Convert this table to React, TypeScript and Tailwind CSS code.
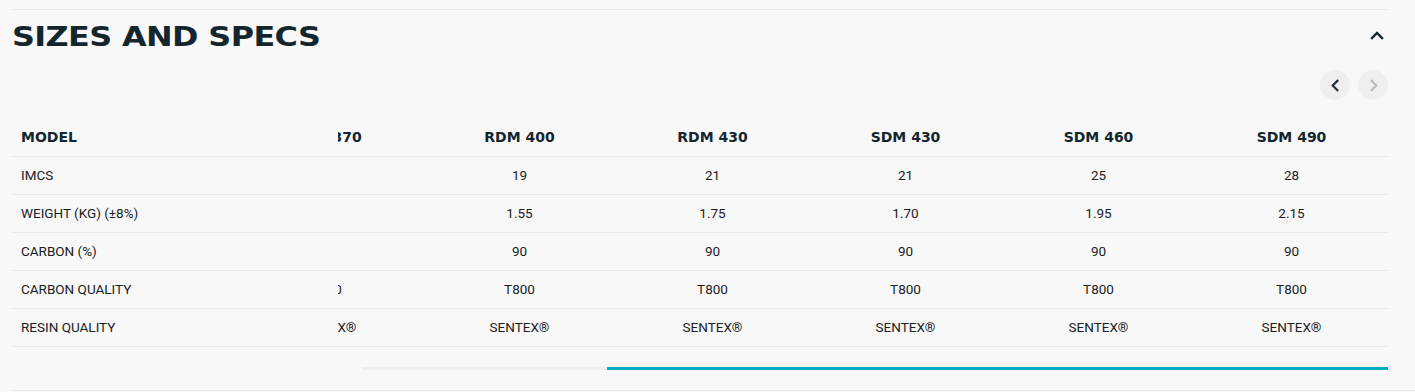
const models = ["RDM 370", "RDM 400", "RDM 430", "SDM 430", "SDM 460", "SDM 490"];

const specs: { label: string; values: string[] }[] = [
  { label: "IMCS", values: ["17", "19", "21", "21", "25", "28"] },
  { label: "WEIGHT (KG) (±8%)", values: ["1.4", "1.55", "1.75", "1.70", "1.95", "2.15"] },
  { label: "CARBON (%)", values: ["90", "90", "90", "90", "90", "90"] },
  { label: "CARBON QUALITY", values: ["T800", "T800", "T800", "T800", "T800", "T800"] },
  { label: "RESIN QUALITY", values: ["SENTEX®", "SENTEX®", "SENTEX®", "SENTEX®", "SENTEX®", "SENTEX®"] },
];

const wide = "font-['DejaVu_Sans',sans-serif] font-bold text-[#13262d]";
const body = "font-['Roboto',sans-serif] text-[13.5px] text-[#1a2124]";

function Chevron({ dir, className }: { dir: "up" | "left" | "right"; className?: string }) {
  const d = dir === "up" ? "M2 8 L7 3 L12 8" : dir === "left" ? "M9 2 L4 7 L9 12" : "M5 2 L10 7 L5 12";
  return (
    <svg viewBox="0 0 14 14" className={className} fill="none" stroke="currentColor" strokeWidth={2.4} strokeLinecap="square">
      <path d={d} />
    </svg>
  );
}

function Row({ label, cells, head }: { label: string; cells: string[]; head?: boolean }) {
  return (
    <div className="flex h-[38px] border-b border-[#e9e9e9]">
      <div className={`flex w-[326px] shrink-0 items-center pl-[9px] ${head ? `${wide} text-[14px]` : body}`}>{label}</div>
      <div className="flex flex-1 justify-end overflow-hidden">
        {cells.map((c, i) => (
          <div
            key={i}
            className={`flex w-[193px] shrink-0 items-center justify-center ${head ? `${wide} text-[14px]` : body}`}
          >
            {c}
          </div>
        ))}
      </div>
    </div>
  );
}

export default function App() {
  return (
    <div className="min-h-[392px] w-[1415px] overflow-hidden bg-[#f8f8f8] pt-[9px]">
      <div className="ml-3 w-[1376px] border-t border-[#e9e9e9]">
        <div className="flex h-[54px] items-center justify-between">
          <h2 className={`${wide} origin-left scale-x-[1.225] text-[26px] leading-none tracking-[-0.5px]`}>SIZES AND SPECS</h2>
          <Chevron dir="up" className="mr-[4px] h-[14px] w-[14px] text-[#13262d]" />
        </div>

        <div className="mt-[6px] flex justify-end gap-[8px]">
          <button className="flex h-[30px] w-[30px] items-center justify-center rounded-full bg-[#efefef] text-[#22323a]">
            <Chevron dir="left" className="h-[13px] w-[13px]" />
          </button>
          <button className="flex h-[30px] w-[30px] items-center justify-center rounded-full bg-[#efefef] text-[#b9bdbf]">
            <Chevron dir="right" className="h-[13px] w-[13px]" />
          </button>
        </div>

        <div className="mt-[19px]">
          <Row label="MODEL" cells={models} head />
          {specs.map((s) => (
            <Row key={s.label} label={s.label} cells={s.values} />
          ))}
        </div>

        <div className="ml-[350px] mt-[20px] flex h-[3px] bg-[#efefef]">
          <div className="w-[245px]" />
          <div className="flex-1 bg-[#00abc6]" />
        </div>
      </div>
      <div className="ml-3 mt-[20px] border-t border-[#e9e9e9]" />
    </div>
  );
}
